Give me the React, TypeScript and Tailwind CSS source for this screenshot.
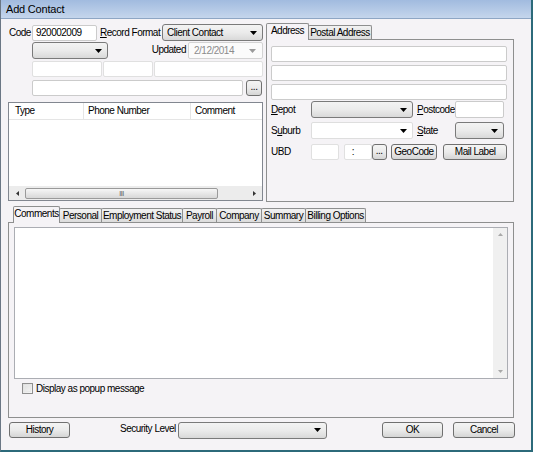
import React from 'react';

const Arrow = ({ color = '#000' }: { color?: string }) => (
  <svg width="7" height="4" viewBox="0 0 7 4">
    <path d="M0 0h7L3.5 4z" fill={color} />
  </svg>
);

const Input = ({ className = '', children }: { className?: string; children?: React.ReactNode }) => (
  <div
    className={`h-[16px] bg-white border border-[#cbcbcb] rounded-[2px] flex items-center px-[3px] leading-none ${className}`}
  >
    {children}
  </div>
);

const Select = ({ className = '', children }: { className?: string; children?: React.ReactNode }) => (
  <div
    className={`h-[17px] border border-[#7a7a7a] rounded-[3px] bg-gradient-to-b from-[#f3f3f3] via-[#ebebeb] to-[#d9d9d9] flex items-center pl-[4px] pr-[5px] leading-none ${className}`}
  >
    <span className="flex-1 truncate">{children}</span>
    <Arrow />
  </div>
);

const Btn = ({ className = '', children }: { className?: string; children?: React.ReactNode }) => (
  <div
    className={`h-[16px] border border-[#707070] rounded-[3px] bg-gradient-to-b from-[#f4f4f4] via-[#ebebeb] to-[#d5d5d5] flex items-center justify-center leading-none ${className}`}
  >
    {children}
  </div>
);

const Tab = ({ label, active, w }: { label: string; active?: boolean; w: string }) =>
  active ? (
    <div
      className={`${w} h-[17px] -mb-px relative z-10 bg-[#f5f3f6] border border-b-0 border-[#8e8f8f] rounded-t-[2px] flex items-center justify-center leading-none pb-[2px]`}
    >
      {label}
    </div>
  ) : (
    <div
      className={`${w} h-[14px] border border-b-0 border-[#8e8f8f] rounded-t-[2px] bg-gradient-to-b from-[#f2f2f2] to-[#dcdcdc] flex items-center justify-center leading-none -ml-px`}
    >
      {label}
    </div>
  );

export default function App() {
  return (
    <div className="w-[533px] h-[452px] bg-[#f5f3f6] text-[10px] tracking-[-0.5px] whitespace-nowrap text-black font-['Liberation_Sans',Arial,sans-serif] flex flex-col border-l border-[#6b7785] border-r-2 border-r-[#2c6a7a] border-b-2 border-b-[#2c6a7a] overflow-hidden">
      {/* Title bar */}
      <div className="h-[19px] shrink-0 bg-gradient-to-b from-[#a1bbdf] to-[#c5d6ec] border-b border-[#8ea6c4] flex items-center pl-[5px] text-[11px] tracking-[-0.2px]">
        Add Contact
      </div>

      <div className="flex-1 pl-[7px] pr-[17px] pt-[3px]">
        {/* Top section */}
        <div className="flex gap-[3px] h-[181px]">
          {/* Left column */}
          <div className="w-[255px] pt-[2px] flex flex-col">
            <div className="flex items-center h-[17px]">
              <span className="w-[24px] pl-px">Code</span>
              <Input className="w-[65px]">920002009</Input>
              <span className="w-[65px] pl-[3px]">
                <u>R</u>ecord Format
              </span>
              <Select className="w-[101px]">Client Contact</Select>
            </div>
            <div className="flex items-center h-[17px] mt-[1px]">
              <div className="w-[24px]" />
              <Select className="w-[76px] h-[16px]" />
              <div className="flex-1" />
              <span className="mr-[2px] pb-[3px]">Updated</span>
              <div className="w-[75px] h-[17px] border border-[#d3d3d3] rounded-[2px] bg-[#fbfbfb] flex items-center pl-[5px] pr-[6px] text-[#8c8c8c] leading-none">
                <span className="flex-1">2/12/2014</span>
                <Arrow color="#9a9a9a" />
              </div>
            </div>
            <div className="flex items-center h-[16px] mt-[2px] gap-px">
              <div className="w-[23px]" />
              <Input className="w-[70px] border-[#e0e0e0]" />
              <Input className="w-[50px] border-[#e0e0e0]" />
              <Input className="flex-1 border-[#e0e0e0]" />
            </div>
            <div className="flex items-center h-[16px] mt-[3px]">
              <div className="w-[24px]" />
              <Input className="w-[211px]" />
              <Btn className="w-[16px] h-[15px] ml-[3px] pb-[3px]">...</Btn>
            </div>

            {/* Phone grid */}
            <div className="mt-[6px] flex-1 mb-[2px] bg-white border border-[#828790] flex flex-col">
              <div className="h-[17px] flex border-b border-[#e5e5e5] leading-none">
                <div className="w-[75px] pl-[6px] flex items-center border-r border-[#e5e5e5]">Type</div>
                <div className="w-[107px] pl-[4px] flex items-center border-r border-[#e5e5e5]">Phone Number</div>
                <div className="flex-1 pl-[4px] flex items-center">Comment</div>
              </div>
              <div className="flex-1" />
              <div className="h-[14px] bg-[#ececec] flex items-center px-[2px]">
                <span className="w-[12px] flex justify-center">
                  <svg width="3" height="5" viewBox="0 0 3 5"><path d="M3 0v5L0 2.5z" fill="#333" /></svg>
                </span>
                <div className="ml-[2px] w-[193px] h-[11px] border border-[#9a9a9a] rounded-[2px] bg-gradient-to-b from-[#f6f6f6] to-[#d8d8d8] flex items-center justify-center text-[7px] leading-none text-[#555]">
                  III
                </div>
                <div className="flex-1" />
                <span className="w-[12px] flex justify-center">
                  <svg width="3" height="5" viewBox="0 0 3 5"><path d="M0 0v5L3 2.5z" fill="#333" /></svg>
                </span>
              </div>
            </div>
          </div>

          {/* Address tabs */}
          <div className="w-[248px] flex flex-col">
            <div className="flex items-end h-[17px] pl-[0px]">
              <Tab label="Address" active w="w-[43px]" />
              <Tab label="Postal Address" w="w-[64px]" />
            </div>
            <div className="flex-1 mb-[1px] border border-[#8e8f8f] pl-[4px] pr-[6px] pt-[6px] flex flex-col">
              <Input className="w-full" />
              <Input className="w-full mt-[3px]" />
              <Input className="w-full mt-[3px]" />
              <div className="flex items-center h-[17px] mt-[1px]">
                <span className="w-[40px]">
                  <u>D</u>epot
                </span>
                <Select className="w-[102px]" />
                <span className="w-[42px] pl-[4px]">
                  <u>P</u>ostcode
                </span>
                <Input className="w-[49px] h-[17px]" />
              </div>
              <div className="flex items-center h-[17px] mt-[4px]">
                <span className="w-[40px]">
                  S<u>u</u>burb
                </span>
                <div className="w-[102px] h-[17px] bg-white border border-[#dedede] rounded-[2px] flex items-center justify-end pr-[5px]">
                  <Arrow />
                </div>
                <span className="w-[42px] pl-[4px]">
                  <u>S</u>tate
                </span>
                <Select className="w-[49px]" />
              </div>
              <div className="flex items-center h-[16px] mt-[5px]">
                <span className="w-[40px] self-start">UBD</span>
                <Input className="w-[28px] border-[#e0e0e0]" />
                <Input className="w-[28px] ml-[5px] border-[#e0e0e0] pl-[7px]">:</Input>
                <Btn className="w-[15px] h-[15px] pb-[3px]">...</Btn>
                <Btn className="w-[47px] ml-[4px]">GeoCode</Btn>
                <Btn className="w-[64px] ml-[6px]">Mail Label</Btn>
              </div>
            </div>
          </div>
        </div>

        {/* Bottom tabs */}
        <div className="mt-[2px] w-[506px] flex flex-col">
          <div className="flex items-end h-[17px] pl-[5px]">
            <Tab label="Comments" active w="w-[47px]" />
            <Tab label="Personal" w="w-[43px]" />
            <Tab label="Employment Status" w="w-[82px]" />
            <Tab label="Payroll" w="w-[35px]" />
            <Tab label="Company" w="w-[46px]" />
            <Tab label="Summary" w="w-[45px]" />
            <Tab label="Billing Options" w="w-[61px]" />
          </div>
          <div className="h-[196px] border border-[#8e8f8f] pl-[5px] pr-[5px] pt-[4px]">
            <div className="h-[152px] bg-white border border-[#abadb3] flex">
              <div className="flex-1" />
              <div className="w-[14px] bg-[#f0f0f0] flex flex-col items-center justify-between py-[5px]">
                <svg width="5" height="3" viewBox="0 0 5 3"><path d="M0 3h5L2.5 0z" fill="#a8a8a8" /></svg>
                <svg width="5" height="3" viewBox="0 0 5 3"><path d="M0 0h5L2.5 3z" fill="#a8a8a8" /></svg>
              </div>
            </div>
            <div className="flex items-center mt-[2px] ml-[8px] h-[14px]">
              <div className="w-[11px] h-[11px] border border-[#8f8f8f] bg-gradient-to-br from-[#dcdcdc] to-[#f8f8f8] p-px">
                <div className="w-full h-full border border-[#e8e8e8]" />
              </div>
              <span className="ml-[3px]">Display as popup message</span>
            </div>
          </div>
        </div>

        {/* Bottom row */}
        <div className="flex items-center mt-[4px] h-[16px] w-[507px]">
          <Btn className="w-[61px] ml-[1px]">History</Btn>
          <span className="ml-[50px] w-[58px] self-start -mt-[1px]">Security Level</span>
          <Select className="w-[149px]" />
          <div className="flex-1" />
          <Btn className="w-[61px]">OK</Btn>
          <Btn className="w-[62px] ml-[10px]">Cancel</Btn>
        </div>
      </div>
    </div>
  );
}
